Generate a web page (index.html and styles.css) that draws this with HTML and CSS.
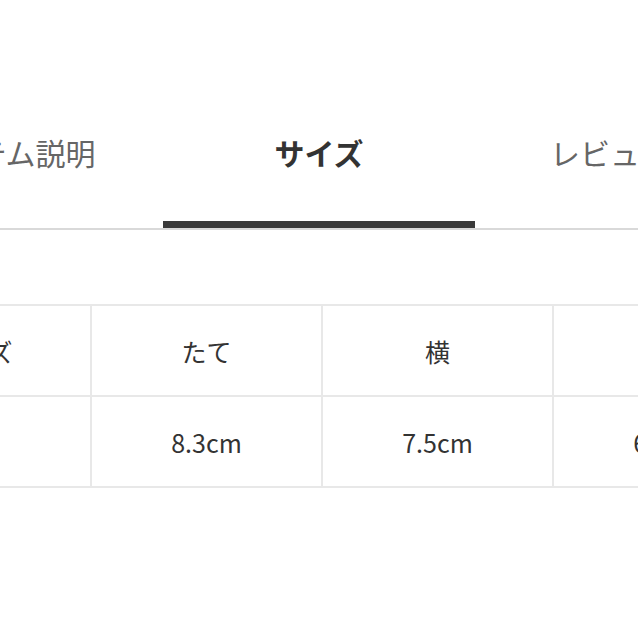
FILE: index.html
```html
<!DOCTYPE html>
<html lang="ja">
<head>
<meta charset="utf-8">
<link rel="stylesheet" href="styles.css">
</head>
<body>
<div class="page">
  <nav class="tabs">
    <div class="tab">アイテム説明</div>
    <div class="tab active">サイズ</div>
    <div class="tab last">レビュー</div>
  </nav>
  <table class="size-table">
    <tr>
      <td>サイズ</td>
      <td>たて</td>
      <td>横</td>
      <td>厚み</td>
    </tr>
    <tr>
      <td>F</td>
      <td>8.3cm</td>
      <td>7.5cm</td>
      <td>6.0cm</td>
    </tr>
  </table>
</div>
</body>
</html>
```
FILE: styles.css
```css
html, body {
  margin: 0;
  padding: 0;
  background: #fff;
}
body {
  overflow: hidden;
  font-family: "Noto Sans CJK JP", "Noto Sans", sans-serif;
  color: #333;
}
.page {
  width: 638px;
  height: 638px;
  overflow: hidden;
}
.tabs {
  display: flex;
  margin-left: -149px;
  padding-top: 130px;
  border-bottom: 2px solid #d9d9d9;
}
.tab {
  flex: none;
  width: 312px;
  text-align: center;
  font-size: 30px;
  line-height: 44px;
  padding-bottom: 47px;
  border-bottom: 7px solid transparent;
  color: #666;
  white-space: nowrap;
}
.tab.last {
  width: 270px;
}
.tab.active {
  color: #333;
  font-weight: 700;
  border-bottom-color: #3a3a3a;
}
.size-table {
  width: 926px;
  margin-top: 74px;
  margin-left: -141px;
  border-collapse: collapse;
  table-layout: fixed;
}
.size-table td {
  width: 229px;
  height: 89px;
  padding: 0;
  border: 2px solid #e8e8e8;
  text-align: center;
  vertical-align: middle;
  font-size: 25px;
  color: #333;
}
```
